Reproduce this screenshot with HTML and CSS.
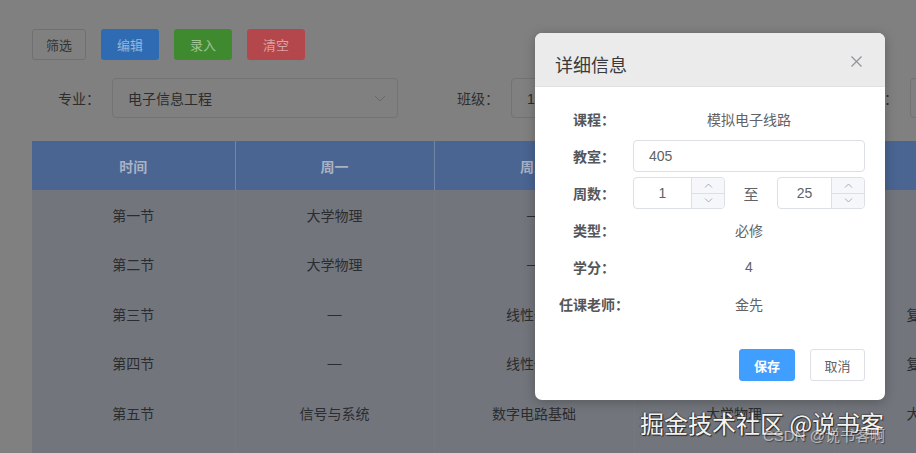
FILE: index.html
```html
<!DOCTYPE html>
<html>
<head>
<meta charset="utf-8">
<title>课程表</title>
<link rel="stylesheet" href="styles.css">
</head>
<body>
<div class="page">
  <div class="toolbar">
    <button class="btn btn-plain">筛选</button>
    <button class="btn btn-blue">编辑</button>
    <button class="btn btn-green">录入</button>
    <button class="btn btn-red">清空</button>
  </div>
  <div class="filters">
    <div class="field">
      <span class="field-label">专业：</span>
      <div class="select">电子信息工程
        <svg class="arrow" width="12" height="7" viewBox="0 0 12 7"><path d="M1 1 L6 6 L11 1" fill="none" stroke="#686868" stroke-width="1"/></svg>
      </div>
    </div>
    <div class="field">
      <span class="field-label">班级：</span>
      <div class="select">1班</div>
    </div>
    <div class="field">
      <span class="field-label">学期：</span>
      <div class="select"></div>
    </div>
  </div>
  <table class="schedule">
    <colgroup>
      <col style="width:203px"><col style="width:199px"><col style="width:200px"><col style="width:200px"><col style="width:200px">
    </colgroup>
    <thead>
      <tr><th>时间</th><th>周一</th><th>周二</th><th>周三</th><th>周四</th></tr>
    </thead>
    <tbody>
      <tr><td>第一节</td><td>大学物理</td><td>—</td><td>—</td><td></td></tr>
      <tr><td>第二节</td><td>大学物理</td><td>—</td><td>—</td><td></td></tr>
      <tr><td>第三节</td><td>—</td><td>线性代数</td><td>模拟电子线路</td><td class="cut">复变函数</td></tr>
      <tr><td>第四节</td><td>—</td><td>线性代数</td><td>模拟电子线路</td><td class="cut">复变函数</td></tr>
      <tr><td>第五节</td><td>信号与系统</td><td>数字电路基础</td><td>大学物理</td><td class="cut">大学物理</td></tr>
      <tr><td></td><td></td><td></td><td></td><td></td></tr>
    </tbody>
  </table>
</div>

<div class="dialog">
  <div class="dialog-head">
    <span class="dialog-title">详细信息</span>
    <svg class="dialog-close" width="11" height="11" viewBox="0 0 11 11"><path d="M0.5 0.5 L10.5 10.5 M10.5 0.5 L0.5 10.5" stroke="#909399" stroke-width="1.2"/></svg>
  </div>
  <div class="dialog-body">
    <div class="row"><span class="row-label">课程：</span><span class="row-value">模拟电子线路</span></div>
    <div class="row"><span class="row-label">教室：</span><div class="input">405</div></div>
    <div class="row">
      <span class="row-label">周数：</span>
      <div class="weeks">
        <div class="number number-a">
          <span class="number-val">1</span>
          <span class="number-ctl">
            <span class="ctl"><svg width="9" height="5" viewBox="0 0 9 5"><path d="M1 4.5 L4.5 1 L8 4.5" fill="none" stroke="#a8abb2"/></svg></span>
            <span class="ctl"><svg width="9" height="5" viewBox="0 0 9 5"><path d="M1 0.5 L4.5 4 L8 0.5" fill="none" stroke="#a8abb2"/></svg></span>
          </span>
        </div>
        <span class="to">至</span>
        <div class="number number-b">
          <span class="number-val">25</span>
          <span class="number-ctl">
            <span class="ctl"><svg width="9" height="5" viewBox="0 0 9 5"><path d="M1 4.5 L4.5 1 L8 4.5" fill="none" stroke="#a8abb2"/></svg></span>
            <span class="ctl"><svg width="9" height="5" viewBox="0 0 9 5"><path d="M1 0.5 L4.5 4 L8 0.5" fill="none" stroke="#a8abb2"/></svg></span>
          </span>
        </div>
      </div>
    </div>
    <div class="row"><span class="row-label">类型：</span><span class="row-value">必修</span></div>
    <div class="row"><span class="row-label">学分：</span><span class="row-value">4</span></div>
    <div class="row"><span class="row-label">任课老师：</span><span class="row-value">金先</span></div>
  </div>
  <div class="dialog-foot">
    <button class="dbtn dbtn-primary">保存</button>
    <button class="dbtn">取消</button>
  </div>
</div>

<div class="watermark">掘金技术社区 @说书客</div>
<div class="watermark-small">CSDN @说书客啊</div>
</body>
</html>
```

FILE: styles.css
```css
html, body {
  margin: 0;
  width: 916px;
  height: 453px;
  overflow: hidden;
}
body {
  background-color: #808080;
  font-family: "Liberation Sans", "Noto Sans CJK SC", sans-serif;
  font-size: 14px;
  position: relative;
}
.page {
  padding: 29px 0 0 32px;
}

.toolbar {
  display: flex;
  gap: 15px;
}
.btn {
  height: 31px;
  padding: 0 15px;
  font-family: inherit;
  font-size: 13px;
  border: 1px solid transparent;
  border-radius: 3px;
  color: rgba(255, 255, 255, 0.5);
}
.btn-plain {
  background-color: #808080;
  border-color: #707070;
  color: #333;
  padding: 0 13px;
}
.btn-blue { background-color: #2f6bb2; }
.btn-green { background-color: #3f8a2e; }
.btn-red { background-color: #b3474b; }

.filters {
  display: flex;
  margin-top: 18px;
  height: 40px;
}
.field {
  display: flex;
  align-items: center;
  margin-right: 33px;
}
.field-label {
  width: 80px;
  box-sizing: border-box;
  padding-right: 12px;
  text-align: right;
  color: #2e2e2e;
}
.select {
  width: 286px;
  height: 40px;
  box-sizing: border-box;
  border: 1px solid #737373;
  border-radius: 4px;
  padding-left: 15px;
  display: flex;
  align-items: center;
  color: #2c2c2c;
  position: relative;
}
.arrow {
  position: absolute;
  right: 11px;
  top: 16px;
}

.schedule {
  margin-top: 23px;
  border-collapse: collapse;
  table-layout: fixed;
  width: 1002px;
}
.schedule th {
  height: 49px;
  background-color: #4a6592;
  color: #a9b2c5;
  font-weight: bold;
  border-left: 1px solid #7185a6;
  padding: 0;
}
.schedule th:first-child { border-left: 0; }
.schedule td {
  height: 49.5px;
  background-color: #72767c;
  color: #2b2c2f;
  text-align: center;
  padding: 0;
  border-left: 1px solid #75797f;
}
.schedule td:first-child { border-left: 0; }
.schedule td.cut {
  text-align: left;
  padding-left: 72px;
  white-space: nowrap;
  overflow: hidden;
}

.dialog {
  position: absolute;
  left: 535px;
  top: 33px;
  width: 350px;
  background-color: #fff;
  border-radius: 7px;
  overflow: hidden;
  box-shadow: 0 2px 12px rgba(0, 0, 0, 0.25);
}
.dialog-head {
  position: relative;
  background-color: #ebebeb;
  padding: 21px 20px 9px;
  border-bottom: 1px solid #e2e2e2;
  height: 23px;
}
.dialog-title {
  font-size: 18px;
  line-height: 24px;
  color: #3a3a3c;
}
.dialog-close {
  position: absolute;
  right: 23px;
  top: 23px;
}
.dialog-body {
  padding: 16px 20px 0;
  display: flex;
  flex-direction: column;
  gap: 5px;
}
.row {
  display: flex;
  align-items: center;
  height: 32px;
}
.row-label {
  width: 78px;
  flex: none;
  text-align: center;
  font-weight: bold;
  color: #555659;
}
.row-value {
  flex: 1;
  text-align: center;
  color: #606266;
}
.input {
  flex: 1;
  height: 32px;
  box-sizing: border-box;
  border: 1px solid #dcdfe6;
  border-radius: 4px;
  padding-left: 15px;
  display: flex;
  align-items: center;
  color: #606266;
}
.weeks {
  flex: 1;
  display: flex;
  align-items: center;
}
.number {
  height: 32px;
  box-sizing: border-box;
  border: 1px solid #dcdfe6;
  border-radius: 4px;
  display: flex;
  overflow: hidden;
  color: #606266;
}
.number-a { width: 92px; }
.number-b { width: 88px; }
.number-val {
  flex: 1;
  display: flex;
  align-items: center;
  justify-content: center;
}
.number-ctl {
  width: 32px;
  border-left: 1px solid #dcdfe6;
  background-color: #f5f7fa;
  display: flex;
  flex-direction: column;
}
.ctl {
  flex: 1;
  display: flex;
  align-items: center;
  justify-content: center;
}
.ctl:first-child { border-bottom: 1px solid #dcdfe6; }
.to {
  flex: 1;
  text-align: center;
  color: #606266;
  font-size: 15px;
}
.dialog-foot {
  display: flex;
  justify-content: flex-end;
  gap: 15px;
  padding: 29px 20px 19px;
}
.dbtn {
  height: 32px;
  width: 55px;
  border: 1px solid #dcdfe6;
  border-radius: 3px;
  background-color: #fff;
  color: #606266;
  font-family: inherit;
  font-size: 13px;
  padding: 0;
}
.dbtn-primary {
  width: 56px;
  background-color: #409eff;
  border-color: #409eff;
  color: #fff;
  font-weight: bold;
}

.watermark {
  position: absolute;
  left: 640px;
  top: 405px;
  font-size: 24px;
  color: #f2f2f2;
  font-family: "Noto Sans CJK SC", sans-serif;
  text-shadow: 1px 1px 1px #222, -1px 0 1px #444, 0 -1px 1px #555;
  white-space: nowrap;
}
.watermark-small {
  position: absolute;
  left: 763px;
  top: 424px;
  font-size: 15px;
  color: rgba(255, 255, 255, 0.55);
  text-shadow: 1px 1px 1px rgba(0, 0, 0, 0.4);
  white-space: nowrap;
}
```
